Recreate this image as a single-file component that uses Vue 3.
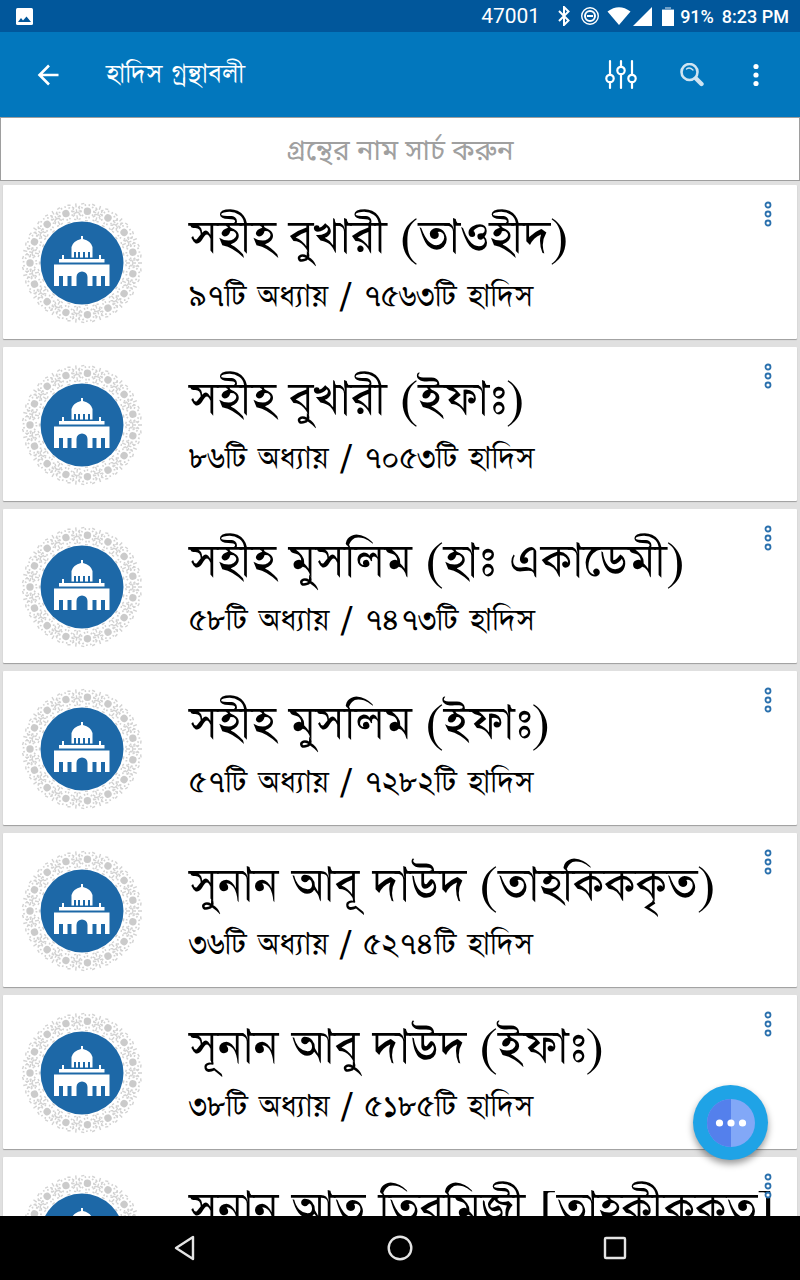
<template>
  <div class="app">
    <header class="top">
      <div class="status">
        <svg class="pic" viewBox="0 0 17 17" aria-hidden="true">
          <rect width="17" height="17" rx="1.5" fill="#fff" />
          <path d="M2 14l3-4 2 2.500 3.500-4L15 14z" fill="#01579b" />
        </svg>
        <span class="count">47001</span>
        <svg class="bluetooth" viewBox="0 0 12 20" aria-hidden="true">
          <path d="M1 5l9.500 9.500L6 19V1l4.500 4.500L1 15" fill="none" stroke="#fff" stroke-width="2" />
        </svg>
        <svg class="dnd" viewBox="0 0 18 18" aria-hidden="true">
          <circle cx="9" cy="9" r="8.300" fill="none" stroke="#fff" stroke-width="1.400" />
          <circle cx="9" cy="9" r="5" fill="none" stroke="#fff" stroke-width="2" />
          <path d="M6 9h6" stroke="#fff" stroke-width="2" />
        </svg>
        <svg class="wifi" viewBox="0 0 24 18" aria-hidden="true">
          <path d="M0.500 4.500Q12-4 23.500 4.500L12 18z" fill="#fff" />
        </svg>
        <svg class="signal" viewBox="0 0 19 19" aria-hidden="true">
          <path d="M19 0v19H0z" fill="#fff" />
        </svg>
        <svg class="battery" viewBox="0 0 12 19" aria-hidden="true">
          <path d="M3 0h6v2h3v2H0V2h3z" fill="#6f9fc7" />
          <path d="M0 3h12v16H0z" fill="#fff" />
        </svg>
        <span class="percent">91%</span>
        <span class="clock">8:23 PM</span>
      </div>
      <div class="bar">
        <button class="icon" aria-label="Back">
          <svg width="22" height="22" viewBox="0 0 22 22">
            <path d="M21.500 11H2M12 1.500L2.500 11l9.500 9.500" fill="none" stroke="#fff" stroke-width="2.600" />
          </svg>
        </button>
        <h1>হাদিস গ্রন্থাবলী</h1>
        <button class="icon" aria-label="Settings">
          <svg width="32" height="32" viewBox="0 0 32 32">
            <g fill="none" stroke="#fff" stroke-width="2.200" stroke-linecap="round">
              <path d="M5 2v13M5 24v5M16 2v5M16 16v13M27 2v13M27 24v5" />
              <circle cx="5" cy="19.500" r="3.700" />
              <circle cx="16" cy="11.500" r="3.700" />
              <circle cx="27" cy="19.500" r="3.700" />
            </g>
          </svg>
        </button>
        <button class="icon" aria-label="Search">
          <svg width="24" height="24" viewBox="0 0 24 24">
            <g fill="none" stroke="#cfe4f2" stroke-linecap="round">
              <circle cx="9.500" cy="9" r="8" stroke-width="2.600" />
              <path d="M6.500 6q3-2.500 6.500 1" stroke-width="1.300" />
              <path d="M16 15.500l5.500 5.500" stroke-width="4.400" />
            </g>
          </svg>
        </button>
        <button class="icon" aria-label="More">
          <svg width="24" height="24" viewBox="0 0 24 24" fill="#fff">
            <circle cx="12" cy="3.500" r="2.600" />
            <circle cx="12" cy="12" r="2.600" />
            <circle cx="12" cy="20.500" r="2.600" />
          </svg>
        </button>
      </div>
    </header>

    <input
      v-model="search"
      class="search"
      type="text"
      aria-label="গ্রন্থের নাম সার্চ করুন"
      placeholder="গ্রন্থের নাম সার্চ করুন"
    />

    <svg class="defs" aria-hidden="true">
      <symbol id="mosque" viewBox="0 0 122 122">
        <g v-for="n in 15" :key="n" :transform="`rotate(${n * 24} 61 61)`">
          <g fill="none" stroke="#d2d2d2">
            <circle cx="9" cy="61" r="6.500" stroke-width="1.800" stroke-dasharray="1.500 2.580" />
            <path d="M1.500 57l1-3M1.500 65l1 3M5 52l3 1M5 70l3-1M11 51l1 3M11 71l1-3M17 55l1-2M17 67l1 2M18.500 59.500v3" stroke-width="1.400" />
            <g transform="rotate(12 61 61)" stroke-width="1.400">
              <path d="M1 61h4M7 61h4M13 61h4M4 57l2 2M4 65l2-2M9 56v3M9 63v3M14 57l-2 2M14 65l-2-2" />
            </g>
          </g>
          <circle cx="9" cy="61" r="3.700" fill="#cbcbcb" />
        </g>
        <circle cx="61" cy="61" r="41.500" fill="#1d68a7" />
        <path
          d="M33 84V62.500h55.500V84H84V74h-4v10h-4.500V74h-4v10h-5V75a5.500 5.500 0 0 0-11 0v9h-5V74h-4v10H42V74h-4v10z"
          fill="#fff"
        />
        <path d="M38 60.500V57h3v-4h2v4h35v-4h2v4h3.500v3.500z" fill="#fff" />
        <path
          d="M50.500 55.500V45q1.500-6 9.500-8v-3h2v3q8 2 9.500 8v10.500H69V50h-2v5.500h-3V50h-2v5.500h-3V50h-2v5.500h-2V50h-2v5.500z"
          fill="#fff"
        />
      </symbol>
    </svg>

    <main class="list">
      <article v-for="book in filtered" :key="book.title" class="card">
        <svg class="logo" aria-hidden="true"><use href="#mosque" /></svg>
        <div class="info">
          <h2>{{ book.title }}</h2>
          <p v-if="book.hadiths">{{ book.chapters }}টি অধ্যায় / {{ book.hadiths }}টি হাদিস</p>
        </div>
        <button class="more" :aria-label="book.title">
          <svg width="8" height="26" viewBox="0 0 8 26" fill="#fff" stroke="#2a70ad" stroke-width="1.800">
            <circle cx="4" cy="4" r="2.500" />
            <circle cx="4" cy="13" r="2.500" />
            <circle cx="4" cy="22" r="2.500" />
          </svg>
        </button>
      </article>
      <button class="fab" aria-label="Chat">
        <svg width="48" height="48" viewBox="0 0 48 48">
          <circle cx="24" cy="24" r="24" fill="#82a8f7" />
          <path d="M24 0a24 24 0 0 0 0 48z" fill="#5480ec" />
          <g fill="#fff">
            <circle cx="12.500" cy="24" r="3.600" />
            <circle cx="24" cy="24" r="3.600" />
            <circle cx="35.500" cy="24" r="3.600" />
          </g>
        </svg>
      </button>
    </main>

    <nav class="nav">
      <button aria-label="Back">
        <svg width="26" height="26" viewBox="0 0 26 26">
          <path d="M21 2v22L4 13z" />
        </svg>
      </button>
      <button aria-label="Home">
        <svg width="26" height="26" viewBox="0 0 26 26">
          <circle cx="13" cy="13" r="11.300" />
        </svg>
      </button>
      <button aria-label="Recent">
        <svg width="26" height="26" viewBox="0 0 26 26">
          <rect x="3" y="3" width="20" height="20" rx="1" />
        </svg>
      </button>
    </nav>
  </div>
</template>

<script setup>
import { ref, computed } from 'vue'

const search = ref('')
const books = ref([
  { title: 'সহীহ বুখারী (তাওহীদ)', chapters: '৯৭', hadiths: '৭৫৬৩' },
  { title: 'সহীহ বুখারী (ইফাঃ)', chapters: '৮৬', hadiths: '৭০৫৩' },
  { title: 'সহীহ মুসলিম (হাঃ একাডেমী)', chapters: '৫৮', hadiths: '৭৪৭৩' },
  { title: 'সহীহ মুসলিম (ইফাঃ)', chapters: '৫৭', hadiths: '৭২৮২' },
  { title: 'সুনান আবূ দাউদ (তাহকিককৃত)', chapters: '৩৬', hadiths: '৫২৭৪' },
  { title: 'সূনান আবু দাউদ (ইফাঃ)', chapters: '৩৮', hadiths: '৫১৮৫' },
  { title: 'সুনান আত তিরমিজী [তাহকীককৃত]' }
])

const filtered = computed(() => books.value.filter((b) => b.title.includes(search.value.trim())))
</script>

<style>
body {
  margin: 0;
}
</style>

<style scoped>
.app {
  height: 100vh;
  display: flex;
  flex-direction: column;
  background-color: #e0e0e0;
  font-family: Roboto, 'Noto Sans Bengali', 'Noto Sans', sans-serif;
}
button {
  padding: 0;
  border: none;
  background-color: transparent;
  cursor: pointer;
}
svg {
  display: block;
  flex-shrink: 0;
}
h1,
h2,
p {
  font-family: 'DejaVu Serif', FreeSerif, 'Noto Serif Bengali', serif;
  font-weight: 400;
  white-space: nowrap;
}
.top {
  flex-shrink: 0;
  color: #fff;
  background-color: #0277bd;
}
.status {
  height: 32px;
  display: flex;
  align-items: center;
  padding: 0 11px 0 16px;
  background-color: #01579b;
}
.pic {
  width: 17px;
  height: 17px;
  margin-right: auto;
}
.count {
  font-size: 21px;
  margin-right: 18px;
}
.bluetooth {
  width: 12px;
  height: 20px;
  margin-right: 11px;
}
.dnd {
  width: 18px;
  height: 18px;
  margin-right: 8px;
}
.wifi {
  width: 24px;
  height: 18px;
  margin-right: 2px;
}
.signal {
  width: 19px;
  height: 19px;
  margin-right: 10px;
}
.battery {
  width: 12px;
  height: 19px;
  margin-right: 6px;
}
.percent,
.clock {
  font-size: 18px;
  font-weight: 500;
}
.clock {
  margin-left: 8px;
}
.bar {
  height: 85px;
  display: flex;
  align-items: center;
  padding: 0 20px 0 24px;
}
.icon {
  width: 48px;
  height: 48px;
  display: flex;
  align-items: center;
  justify-content: center;
}
h1 {
  flex: 1;
  margin: 0 0 0 34px;
  padding-bottom: 4px;
  font-size: 31px;
  line-height: 40px;
}
.icon + .icon {
  margin-left: 23px;
}
.icon:last-child {
  margin-left: 16px;
}
.search {
  flex-shrink: 0;
  width: 100%;
  height: 64px;
  box-sizing: border-box;
  padding: 2px 0 0;
  border: 1px solid #9e9e9e;
  outline: none;
  background-color: #fff;
  font-family: inherit;
  font-size: 28px;
  text-align: center;
}
.search::placeholder {
  color: #a0a0a0;
}
.defs {
  display: none;
}
.list {
  flex: 1;
  min-height: 0;
  position: relative;
  overflow: hidden;
  display: flex;
  flex-direction: column;
  gap: 8px;
  padding: 4px 3px 0;
}
.card {
  flex-shrink: 0;
  height: 154px;
  position: relative;
  display: flex;
  align-items: flex-start;
  box-sizing: border-box;
  padding: 17px 18px;
  background-color: #fff;
  border-radius: 1px;
  box-shadow: 0 1px 1px rgba(0, 0, 0, 0.3);
}
.logo {
  width: 122px;
  height: 122px;
}
.info {
  margin-left: 46px;
  color: #000;
}
h2 {
  margin: 0;
  font-family: FreeSerif, 'Noto Serif Bengali', serif;
  font-size: 55px;
  line-height: 74px;
}
p {
  margin: 0;
  font-size: 36px;
  line-height: 40px;
}
.more {
  position: absolute;
  top: 16px;
  right: 25px;
}
.fab {
  position: absolute;
  right: 32px;
  bottom: 56px;
  width: 75px;
  height: 75px;
  display: flex;
  align-items: center;
  justify-content: center;
  border-radius: 50%;
  background-color: #1fa3e6;
  box-shadow: 0 4px 7px rgba(0, 0, 0, 0.4);
}
.nav {
  flex-shrink: 0;
  height: 64px;
  display: flex;
  align-items: center;
  justify-content: center;
  gap: 189px;
  background-color: #000;
}
.nav svg {
  fill: none;
  stroke: #e4e4e4;
  stroke-width: 2.4;
  stroke-linejoin: round;
}
</style>
